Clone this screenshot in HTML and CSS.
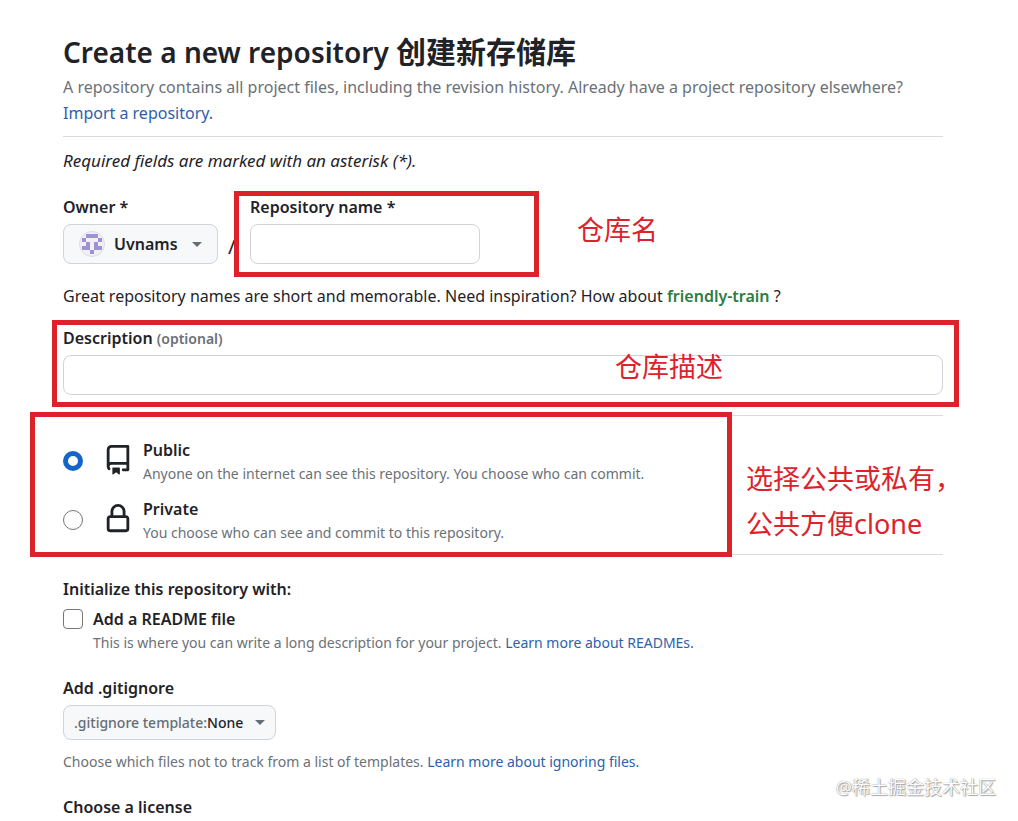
FILE: index.html
```html
<!DOCTYPE html>
<html lang="en">

<head>
  <meta charset="UTF-8">
  <meta name="viewport" content="width=device-width, initial-scale=1">
  <title>Create a new repository</title>
  <link rel="stylesheet" href="styles.css">
</head>

<body>
  <main class="page">
    <header class="page-head">
      <h1>Create a new repository <span lang="zh-CN">创建新存储库</span></h1>
      <p>A repository contains all project files, including the revision history. Already have a project repository elsewhere? <a href="#">Import a repository.</a></p>
    </header>

    <form>
      <p class="required-note">Required fields are marked with an asterisk (*).</p>

      <div class="name-row">
        <div class="field">
          <label class="field-label" for="owner">Owner *</label>
          <div class="picker">
            <svg class="avatar" viewBox="0 0 26 26" aria-hidden="true">
              <circle cx="13" cy="13" r="12.5" fill="#f0f0f5" stroke="#dcdce6" />
              <path fill="#9f91d4" d="M7 3h12v4H7zM3 7h4v4H3zM19 7h4v4h-4zM7 11h4v4H7zM15 11h4v4h-4zM3 15h8v4H3zM15 15h8v4h-8zM11 19h4v4h-4z" />
            </svg>
            <select id="owner">
              <option>Uvnams</option>
            </select>
            <span class="caret"></span>
          </div>
        </div>
        <span class="slash">/</span>
        <div class="field marked">
          <label class="field-label" for="repo">Repository name *</label>
          <input class="text-input" type="text" id="repo">
          <div class="frame frame-name"></div>
          <div class="note note-name" lang="zh-CN">仓库名</div>
        </div>
      </div>

      <p class="hint">Great repository names are short and memorable. Need inspiration? How about <strong>friendly-train</strong> ?</p>

      <div class="field description marked">
        <label class="field-label" for="desc">Description <small>(optional)</small></label>
        <input class="text-input" type="text" id="desc">
        <div class="frame frame-desc"></div>
        <div class="note note-desc" lang="zh-CN">仓库描述</div>
      </div>

      <div class="visibility marked">
        <div class="choice">
          <input type="radio" name="visibility" id="public" checked>
          <svg class="icon" viewBox="0 0 16 16" aria-hidden="true">
            <path d="M2 2.5A2.5 2.5 0 0 1 4.5 0h8.75a.75.75 0 0 1 .75.75v12.5a.75.75 0 0 1-.75.75h-2.5a.75.75 0 0 1 0-1.5h1.75v-2h-8a1 1 0 0 0-.714 1.7.75.75 0 1 1-1.072 1.05A2.495 2.495 0 0 1 2 11.5Zm10.5-1h-8a1 1 0 0 0-1 1v6.708A2.486 2.486 0 0 1 4.5 9h8ZM5 12.25a.25.25 0 0 1 .25-.25h3.5a.25.25 0 0 1 .25.25v3.25a.25.25 0 0 1-.4.2l-1.45-1.087a.249.249 0 0 0-.3 0L5.4 15.7a.25.25 0 0 1-.4-.2Z" />
          </svg>
          <label for="public">
            <span class="field-label">Public</span>
            <span class="help">Anyone on the internet can see this repository. You choose who can commit.</span>
          </label>
        </div>
        <div class="choice">
          <input type="radio" name="visibility" id="private">
          <svg class="icon" viewBox="0 0 16 16" aria-hidden="true">
            <path d="M4 4a4 4 0 0 1 8 0v2h.25c.966 0 1.75.784 1.75 1.75v5.5A1.75 1.75 0 0 1 12.25 15h-8.5A1.75 1.75 0 0 1 2 13.25v-5.5C2 6.784 2.784 6 3.75 6H4Zm8.25 3.5h-8.5a.25.25 0 0 0-.25.25v5.5c0 .138.112.25.25.25h8.5a.25.25 0 0 0 .25-.25v-5.5a.25.25 0 0 0-.25-.25ZM10.5 6V4a2.5 2.5 0 1 0-5 0v2Z" />
          </svg>
          <label for="private">
            <span class="field-label">Private</span>
            <span class="help">You choose who can see and commit to this repository.</span>
          </label>
        </div>
        <div class="frame frame-visibility"></div>
        <div class="note note-visibility" lang="zh-CN">选择公共或私有，<br>公共方便clone</div>
      </div>

      <section class="group">
        <h2 class="field-label">Initialize this repository with:</h2>
        <div class="check">
          <input type="checkbox" id="readme">
          <div>
            <label class="field-label" for="readme">Add a README file</label>
            <p class="help">This is where you can write a long description for your project. <a href="#">Learn more about READMEs.</a></p>
          </div>
        </div>
      </section>

      <section class="group">
        <h2 class="field-label">Add .gitignore</h2>
        <div class="picker picker-small">
          <label for="gitignore">.gitignore template:</label>
          <select id="gitignore">
            <option>None</option>
          </select>
          <span class="caret"></span>
        </div>
        <p class="help">Choose which files not to track from a list of templates. <a href="#">Learn more about ignoring files.</a></p>
      </section>

      <section class="group">
        <h2 class="field-label">Choose a license</h2>
      </section>
    </form>
  </main>
  <div class="watermark" lang="zh-CN">@稀土掘金技术社区</div>
</body>

</html>
```

FILE: styles.css
```css
* {
  box-sizing: border-box;
}

body {
  position: relative;
  margin: 0;
  background: #fff;
  color: #1f2328;
  font: 16px/26px "Noto Sans", "Noto Sans CJK SC", sans-serif;
}

h1,
h2,
p {
  margin: 0;
}

a {
  color: #2c62ac;
  text-decoration: none;
}

input,
select {
  margin: 0;
  font: inherit;
  color: inherit;
}

.page {
  padding: 28px 75px 0 63px;
}

.page-head {
  padding-bottom: 10px;
  border-bottom: 1px solid #d8dadd;
  color: #6b7177;
}

.page-head h1 {
  color: #1f2328;
  font-size: 28px;
  font-weight: 600;
  line-height: 44px;
}

.page-head h1 span {
  font-family: "Noto Sans CJK SC", sans-serif;
  font-size: 30px;
  font-weight: 700;
}

.required-note {
  margin-top: 11px;
  font-size: 17px;
  font-style: italic;
}

.name-row {
  display: flex;
  align-items: flex-end;
  margin-top: 20px;
}

.field {
  display: flex;
  flex-direction: column;
  gap: 4px;
}

.field-label {
  font-size: 16px;
  font-weight: 600;
  line-height: 26px;
}

.field-label small {
  color: #6b7177;
  font-size: 14px;
  line-height: 1;
}

.text-input {
  width: 100%;
  height: 40px;
  padding: 0 14px;
  border: 1px solid #d0d4d9;
  border-radius: 8px;
  background: #fff;
}

.name-row .text-input {
  width: 230px;
}

.slash {
  width: 32px;
  padding-left: 10px;
  font-size: 20px;
  line-height: 34px;
}

.picker {
  display: flex;
  align-items: center;
  width: 155px;
  height: 40px;
  padding: 0 15px;
  border: 1px solid #d0d4d9;
  border-radius: 8px;
  background: #f6f8fa;
  font-weight: 600;
}

.picker select {
  flex: 1;
  min-width: 0;
  padding: 0;
  border: 0;
  background: none;
  appearance: none;
}

.avatar {
  width: 26px;
  height: 26px;
  margin-right: 9px;
}

.caret {
  border: 5px solid transparent;
  border-top-color: #656d76;
  border-bottom: 0;
}

.picker-small {
  width: 213px;
  height: 35px;
  margin: 4px 0 11px;
  padding: 0 10px;
  font-size: 14px;
  font-weight: 500;
}

.picker-small label {
  color: #656d76;
}

.hint {
  margin-top: 19px;
}

.hint strong {
  color: #2c7d41;
  font-weight: 600;
}

.description {
  margin-top: 16px;
}

.visibility {
  display: grid;
  gap: 11px;
  margin-top: 20px;
  padding: 21px 0 10px;
  border: solid #d8dadd;
  border-width: 1px 0;
}

.choice {
  display: flex;
  align-items: center;
}

.choice label {
  display: grid;
}

.help {
  color: #6b7177;
  font-size: 14px;
  line-height: 22px;
}

.choice input,
.check input {
  flex: none;
  width: 20px;
  height: 20px;
  border: 1px solid #767676;
  background: #fff;
  appearance: none;
}

.choice input {
  border-radius: 50%;
}

.choice input:checked {
  border: 5px solid #1465c8;
}

.icon {
  width: 30px;
  height: 30px;
  margin: 0 10px 3px 20px;
  fill: #1f2328;
}

.group {
  margin-top: 21px;
}

.check {
  display: flex;
  gap: 10px;
  margin-top: 4px;
}

.check input {
  margin-top: 3px;
  border-radius: 4px;
}

/* red markup drawn over the form */
.marked {
  position: relative;
}

.frame {
  position: absolute;
  border: 5px solid #dc222b;
  pointer-events: none;
}

.frame-name {
  inset: -3px -59px -13px -16px;
}

.frame-desc {
  inset: -5px -16px -12px -11px;
}

.frame-visibility {
  inset: -4px 211px -3px -33px;
}

.note {
  position: absolute;
  color: #dc222b;
  font-size: 27px;
  line-height: 45px;
  white-space: nowrap;
  pointer-events: none;
}

.note-name {
  top: 13px;
  left: 327px;
}

.note-desc {
  top: 19px;
  left: 552px;
}

.note-visibility {
  top: 40px;
  left: 683px;
}

.watermark {
  position: absolute;
  right: 22px;
  bottom: 20px;
  color: #fff;
  font-size: 18px;
  text-shadow: 0 0 1px #777, 1px 1px 1px #aaa;
}
```
